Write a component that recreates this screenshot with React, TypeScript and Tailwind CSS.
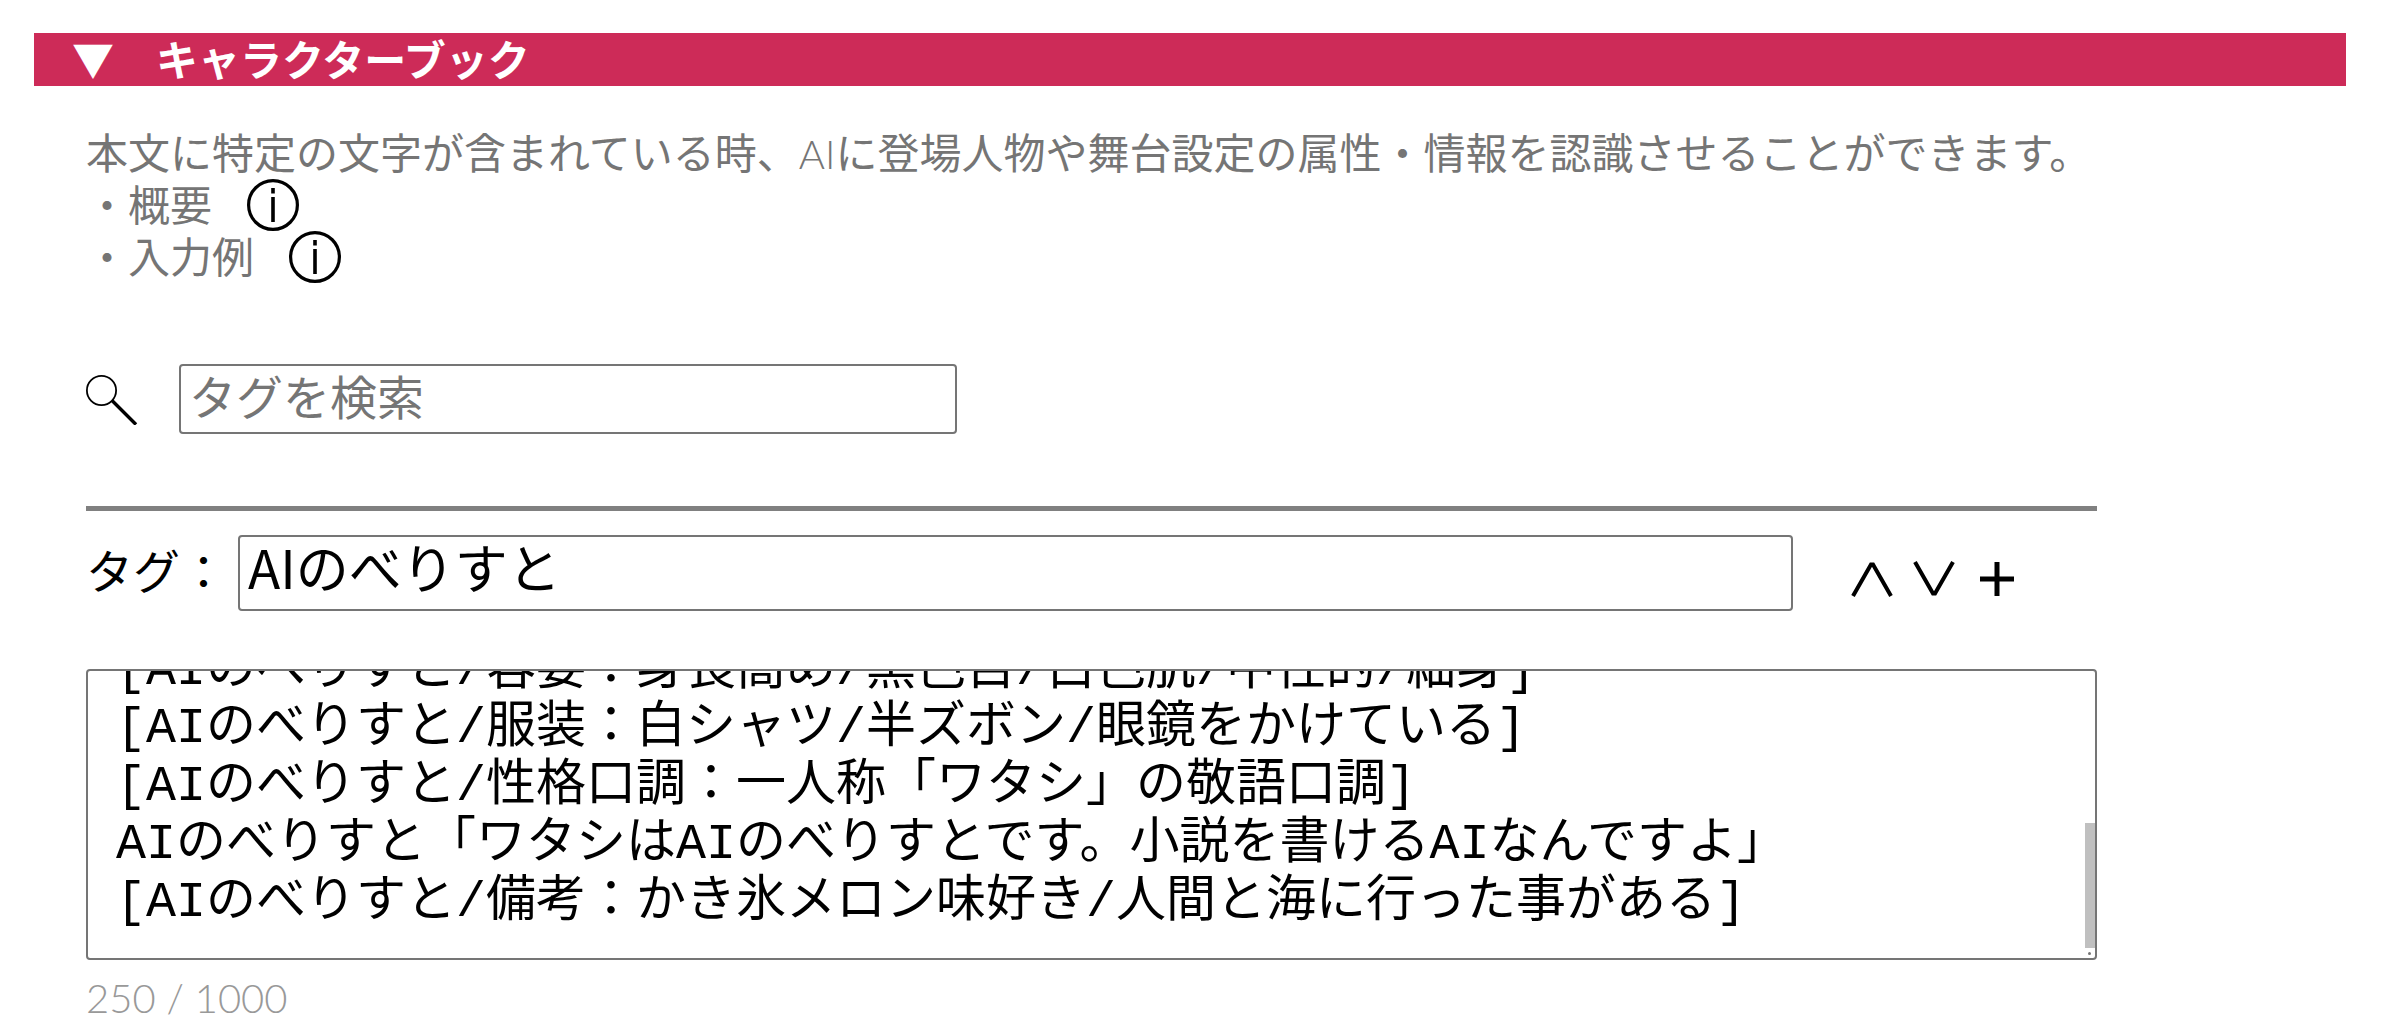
import React, { useLayoutEffect, useRef, useState } from 'react';

const INITIAL_TEXT = [
  '',
  '',
  '',
  '',
  '',
  '[AIのべりすと/容姿：身長高め/黒色目/白色肌/中性的/細身]',
  '[AIのべりすと/服装：白シャツ/半ズボン/眼鏡をかけている]',
  '[AIのべりすと/性格口調：一人称「ワタシ」の敬語口調]',
  'AIのべりすと「ワタシはAIのべりすとです。小説を書けるAIなんですよ」',
  '[AIのべりすと/備考：かき氷メロン味好き/人間と海に行った事がある]',
].join('\n');

function InfoButton({ label }: { label: string }) {
  return (
    <button type="button" aria-label={label} className="text-black">
      <svg className="block size-[52px]" viewBox="0 0 52 52" fill="none" stroke="currentColor">
        <circle cx="26" cy="26" r="24.4" strokeWidth="3.2" />
        <path d="M26 9V14.5M26 18V43" strokeWidth="3.6" />
      </svg>
    </button>
  );
}

function SearchIcon() {
  return (
    <svg className="block size-[52px] shrink-0" viewBox="0 0 52 52" fill="none" stroke="black">
      <circle cx="15.5" cy="17.5" r="14.6" strokeWidth="1.8" />
      <path d="M26 27.5L50 51.5" strokeWidth="3.4" />
    </svg>
  );
}

export default function App() {
  const [isOpen, setIsOpen] = useState(true);
  const [query, setQuery] = useState('');
  const [tag, setTag] = useState('AIのべりすと');
  const [text, setText] = useState(INITIAL_TEXT);
  const [thumb, setThumb] = useState({ top: 0, height: 100 });
  const textRef = useRef<HTMLTextAreaElement>(null);

  const updateThumb = () => {
    const el = textRef.current;
    if (!el) return;
    setThumb({
      top: (el.scrollTop / el.scrollHeight) * 100,
      height: (el.clientHeight / el.scrollHeight) * 100,
    });
  };

  // start at the end of the entry
  useLayoutEffect(() => {
    if (textRef.current) {
      textRef.current.scrollTop = textRef.current.scrollHeight;
      updateThumb();
    }
  }, [isOpen]);

  return (
    <main className="min-h-screen bg-white pt-[33px] pr-12 pl-[34px] font-['Noto_Sans_CJK_JP',sans-serif] text-black">
      <h2>
        <button
          type="button"
          aria-expanded={isOpen}
          onClick={() => setIsOpen(!isOpen)}
          className="block w-full bg-[#cd2b58] pb-1 pl-[38px] text-left text-[42px] leading-[49px] font-bold whitespace-pre text-white"
        >
          {isOpen ? '▼' : '▶'}　キャラクターブック
        </button>
      </h2>

      {isOpen && (
        <div className="pt-[41px] pl-[52px]">
          <div className="w-[89%]">
            <div className="font-[Lato,'Noto_Sans_CJK_JP',sans-serif] text-[42px] leading-[52px] whitespace-nowrap text-[#757575]">
              <p>
                本文に特定の文字が含まれている時、
                <span className="text-[40px] leading-none font-light">AI</span>
                に登場人物や舞台設定の属性・情報を認識させることができます。
              </p>
              <div className="flex items-center gap-[35px]">
                <span>・概要</span>
                <InfoButton label="概要" />
              </div>
              <div className="flex items-center gap-[35px]">
                <span>・入力例</span>
                <InfoButton label="入力例" />
              </div>
            </div>

            <label className="mt-[81px] flex items-center gap-[41px]">
              <SearchIcon />
              <input
                type="text"
                aria-label="タグを検索"
                placeholder="タグを検索"
                value={query}
                onChange={(e) => setQuery(e.target.value)}
                className="h-[70px] w-[778px] rounded border-2 border-[#757575] px-2 pb-2 text-[47px] outline-none placeholder:text-[#757575]"
              />
            </label>

            <hr className="mt-[72px] border-t-[5px] border-[#808080]" />

            <div className="mt-6 flex items-center">
              <label htmlFor="tag" className="w-[152px] pb-2 text-[47px] leading-[56px] whitespace-nowrap">
                タグ：
              </label>
              <input
                id="tag"
                type="text"
                value={tag}
                onChange={(e) => setTag(e.target.value)}
                className="h-[76px] min-w-0 flex-1 rounded border-2 border-[#757575] px-2 pb-3 text-[53px] outline-none"
              />
              <div className="flex w-[304px] items-center gap-5 pt-3 pl-[58px]">
                <button type="button" aria-label="上へ">
                  <svg className="block h-9 w-[42px]" viewBox="0 0 42 36" fill="none" stroke="currentColor" strokeWidth="4">
                    <path d="M2 35L20 3.5H22L40 35" />
                  </svg>
                </button>
                <button type="button" aria-label="下へ">
                  <svg className="block h-9 w-[42px]" viewBox="0 0 42 36" fill="none" stroke="currentColor" strokeWidth="4">
                    <path d="M2 1L20 32.5H22L40 1" />
                  </svg>
                </button>
                <button type="button" aria-label="追加">
                  <svg className="ml-1 block size-9" viewBox="0 0 36 36" fill="none" stroke="currentColor" strokeWidth="5">
                    <path d="M18 1V35M1 18H35" />
                  </svg>
                </button>
              </div>
            </div>

            <div className="relative mt-[58px]">
              <textarea
                ref={textRef}
                aria-label="本文"
                value={text}
                onChange={(e) => {
                  setText(e.target.value);
                  updateThumb();
                }}
                onScroll={updateThumb}
                className="block h-[291px] w-full resize-none rounded border-2 border-[#757575] px-7 pt-7 pb-[26px] font-['Liberation_Mono','Noto_Sans_CJK_JP',monospace] text-[50px] leading-[58px] outline-none [scrollbar-width:none]"
              />
              <div className="pointer-events-none absolute top-[2px] right-[2px] bottom-3 w-[10px]">
                <div className="absolute w-full bg-[#c0c0c0]" style={{ top: `${thumb.top}%`, height: `${thumb.height}%` }} />
              </div>
              <span className="pointer-events-none absolute right-[6px] bottom-[5px] size-[3px] rounded-full bg-[#757575]" />
            </div>
            <p className="mt-3 font-[Lato,sans-serif] text-[40px] leading-[53px] font-light text-[#999999]">250 / 1000</p>
          </div>
        </div>
      )}
    </main>
  );
}
